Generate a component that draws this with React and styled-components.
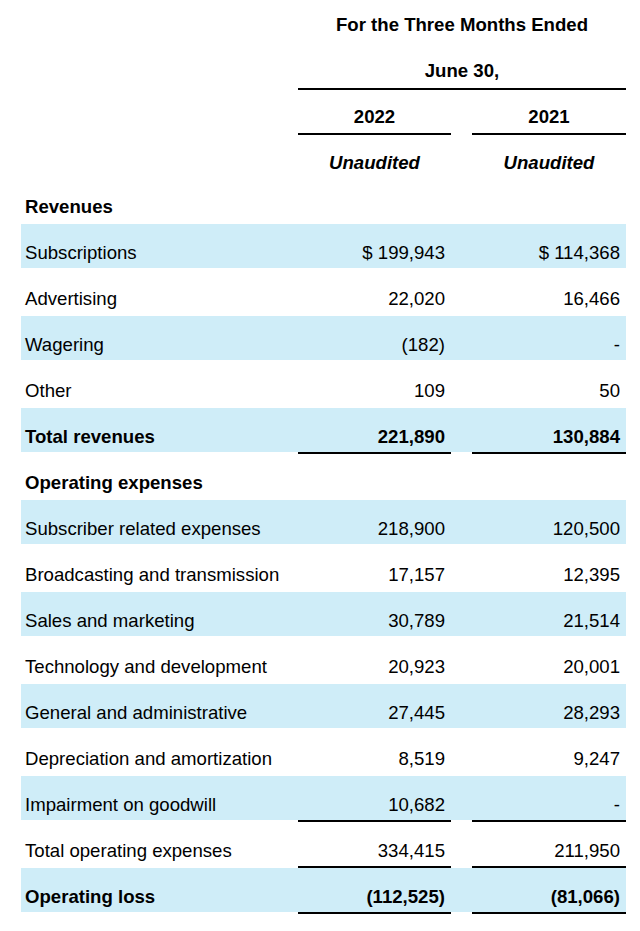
import React from 'react';
import styled, { createGlobalStyle } from 'styled-components';

const GlobalStyle = createGlobalStyle`
  body {
    margin: 0;
    background: #ffffff;
    font-family: "Liberation Sans", Arial, sans-serif;
    color: #000000;
  }
`;

const SHADE = '#cfedf8';

const Table = styled.div`
  width: 605px;
  margin-left: 21px;
  font-size: 18.6px;
`;

const Row = styled.div`
  display: grid;
  grid-template-columns: 277px 153px 21px 154px;
  height: ${(p) => p.$h || 46}px;
  background: ${(p) => (p.$shaded ? `linear-gradient(${SHADE}, ${SHADE}) no-repeat top left / 100% ${(p.$h || 46) - 2}px` : 'none')};
  font-weight: ${(p) => (p.$bold ? 700 : 400)};
`;

const Cell = styled.div`
  display: flex;
  align-items: center;
  box-sizing: border-box;
  padding-top: ${(p) => p.$pt || 14}px;
  border-bottom: 2px solid ${(p) => (p.$line ? '#000' : 'transparent')};
`;

const Label = styled(Cell)`
  padding-left: 4px;
`;

const Num = styled(Cell)`
  justify-content: flex-end;
  padding-right: 6px;
`;

const Head = styled(Cell)`
  justify-content: center;
  font-weight: 700;
  font-style: ${(p) => (p.$italic ? 'italic' : 'normal')};
  grid-column: ${(p) => p.$span || 'auto'};
`;

const rows = [
  { type: 'section', label: 'Revenues', h: 44, pt: 12 },
  { label: 'Subscriptions', a: '$ 199,943', b: '$ 114,368', shaded: true },
  { label: 'Advertising', a: '22,020', b: '16,466' },
  { label: 'Wagering', a: '(182)', b: '-', shaded: true },
  { label: 'Other', a: '109', b: '50' },
  { label: 'Total revenues', a: '221,890', b: '130,884', shaded: true, bold: true, line: true },
  { type: 'section', label: 'Operating expenses', pt: 14 },
  { label: 'Subscriber related expenses', a: '218,900', b: '120,500', shaded: true },
  { label: 'Broadcasting and transmission', a: '17,157', b: '12,395' },
  { label: 'Sales and marketing', a: '30,789', b: '21,514', shaded: true },
  { label: 'Technology and development', a: '20,923', b: '20,001' },
  { label: 'General and administrative', a: '27,445', b: '28,293', shaded: true },
  { label: 'Depreciation and amortization', a: '8,519', b: '9,247' },
  { label: 'Impairment on goodwill', a: '10,682', b: '-', shaded: true, line: true },
  { label: 'Total operating expenses', a: '334,415', b: '211,950', line: true },
  { label: 'Operating loss', a: '(112,525)', b: '(81,066)', shaded: true, bold: true, line: true },
];

export default function App() {
  return (
    <>
      <GlobalStyle />
      <Table>
        <Row $h={45}>
          <div />
          <Head $span="2 / 5" $pt={6}>For the Three Months Ended</Head>
        </Row>
        <Row $h={45}>
          <div />
          <Head $span="2 / 5" $pt={8} $line>June 30,</Head>
        </Row>
        <Row $h={45}>
          <div />
          <Head $pt={10} $line>2022</Head>
          <div />
          <Head $pt={10} $line>2021</Head>
        </Row>
        <Row $h={45}>
          <div />
          <Head $pt={12} $italic>Unaudited</Head>
          <div />
          <Head $pt={12} $italic>Unaudited</Head>
        </Row>
        {rows.map((r) =>
          r.type === 'section' ? (
            <Row key={r.label} $h={r.h} $bold>
              <Label $pt={r.pt}>{r.label}</Label>
            </Row>
          ) : (
            <Row key={r.label} $shaded={r.shaded} $bold={r.bold}>
              <Label>{r.label}</Label>
              <Num $line={r.line}>{r.a}</Num>
              <div />
              <Num $line={r.line}>{r.b}</Num>
            </Row>
          )
        )}
      </Table>
    </>
  );
}
